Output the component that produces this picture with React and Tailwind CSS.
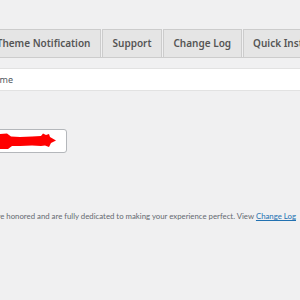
import React from 'react';

function Tab({ label }) {
  return (
    <div className="h-[28px] px-[9.5px] flex items-center bg-[#e5e5e5] border border-[#cccccc] border-b-0 text-[#555555] text-[10px] font-semibold whitespace-nowrap">
      {label}
    </div>
  );
}

function App() {
  return (
    <div className="w-[300px] h-[300px] bg-[#f0f0f1] overflow-hidden font-['Noto_Sans','Open_Sans',sans-serif]">
      <div className="pt-[29px]">
        <div className="flex items-end gap-[1px] border-b border-[#cccccc]">
          <div className="w-[101px] shrink-0 flex justify-end">
            <Tab label="Theme Notification" />
          </div>
          <Tab label="Support" />
          <Tab label="Change Log" />
          <Tab label="Quick Install" />
        </div>
      </div>

      <div className="mt-[10px] h-[23px] bg-white border-y border-[#e2e2e2] flex items-center">
        <div className="w-[13px] shrink-0 flex justify-end text-[9px] text-[#50575e] whitespace-nowrap">
          Child Theme
        </div>
      </div>

      <div className="mt-[38px] w-[67px] flex justify-end">
        <div className="shrink-0 w-[120px] h-[24px] bg-white border border-[#b4b7bb] rounded-[3px] flex items-center justify-end pr-[8px]">
          <svg width="60" height="17" viewBox="0 0 60 17">
            <path
              d="M0 1 L9 0.5 L13 3.5 L22 4 L34 3.5 L43 3 L45 0.5 L48 2 L51 1 L52 4 L58 7.5 L53 10 L51 14 L47 12.5 L43 13 L34 12.5 L22 13 L14 13 L10 16 L0 16 Z"
              fill="#ff0000"
            />
          </svg>
        </div>
      </div>

      <div className="mt-[58px] w-[296px] flex justify-end">
        <p className="shrink-0 whitespace-nowrap text-[7.8px] text-[#646970] font-['Lato',sans-serif]">
          We are honored and are fully dedicated to making your experience perfect. View{' '}
          <a href="#" className="text-[#2271b1] underline">Change Log</a>
        </p>
      </div>
    </div>
  );
}

export default App;
